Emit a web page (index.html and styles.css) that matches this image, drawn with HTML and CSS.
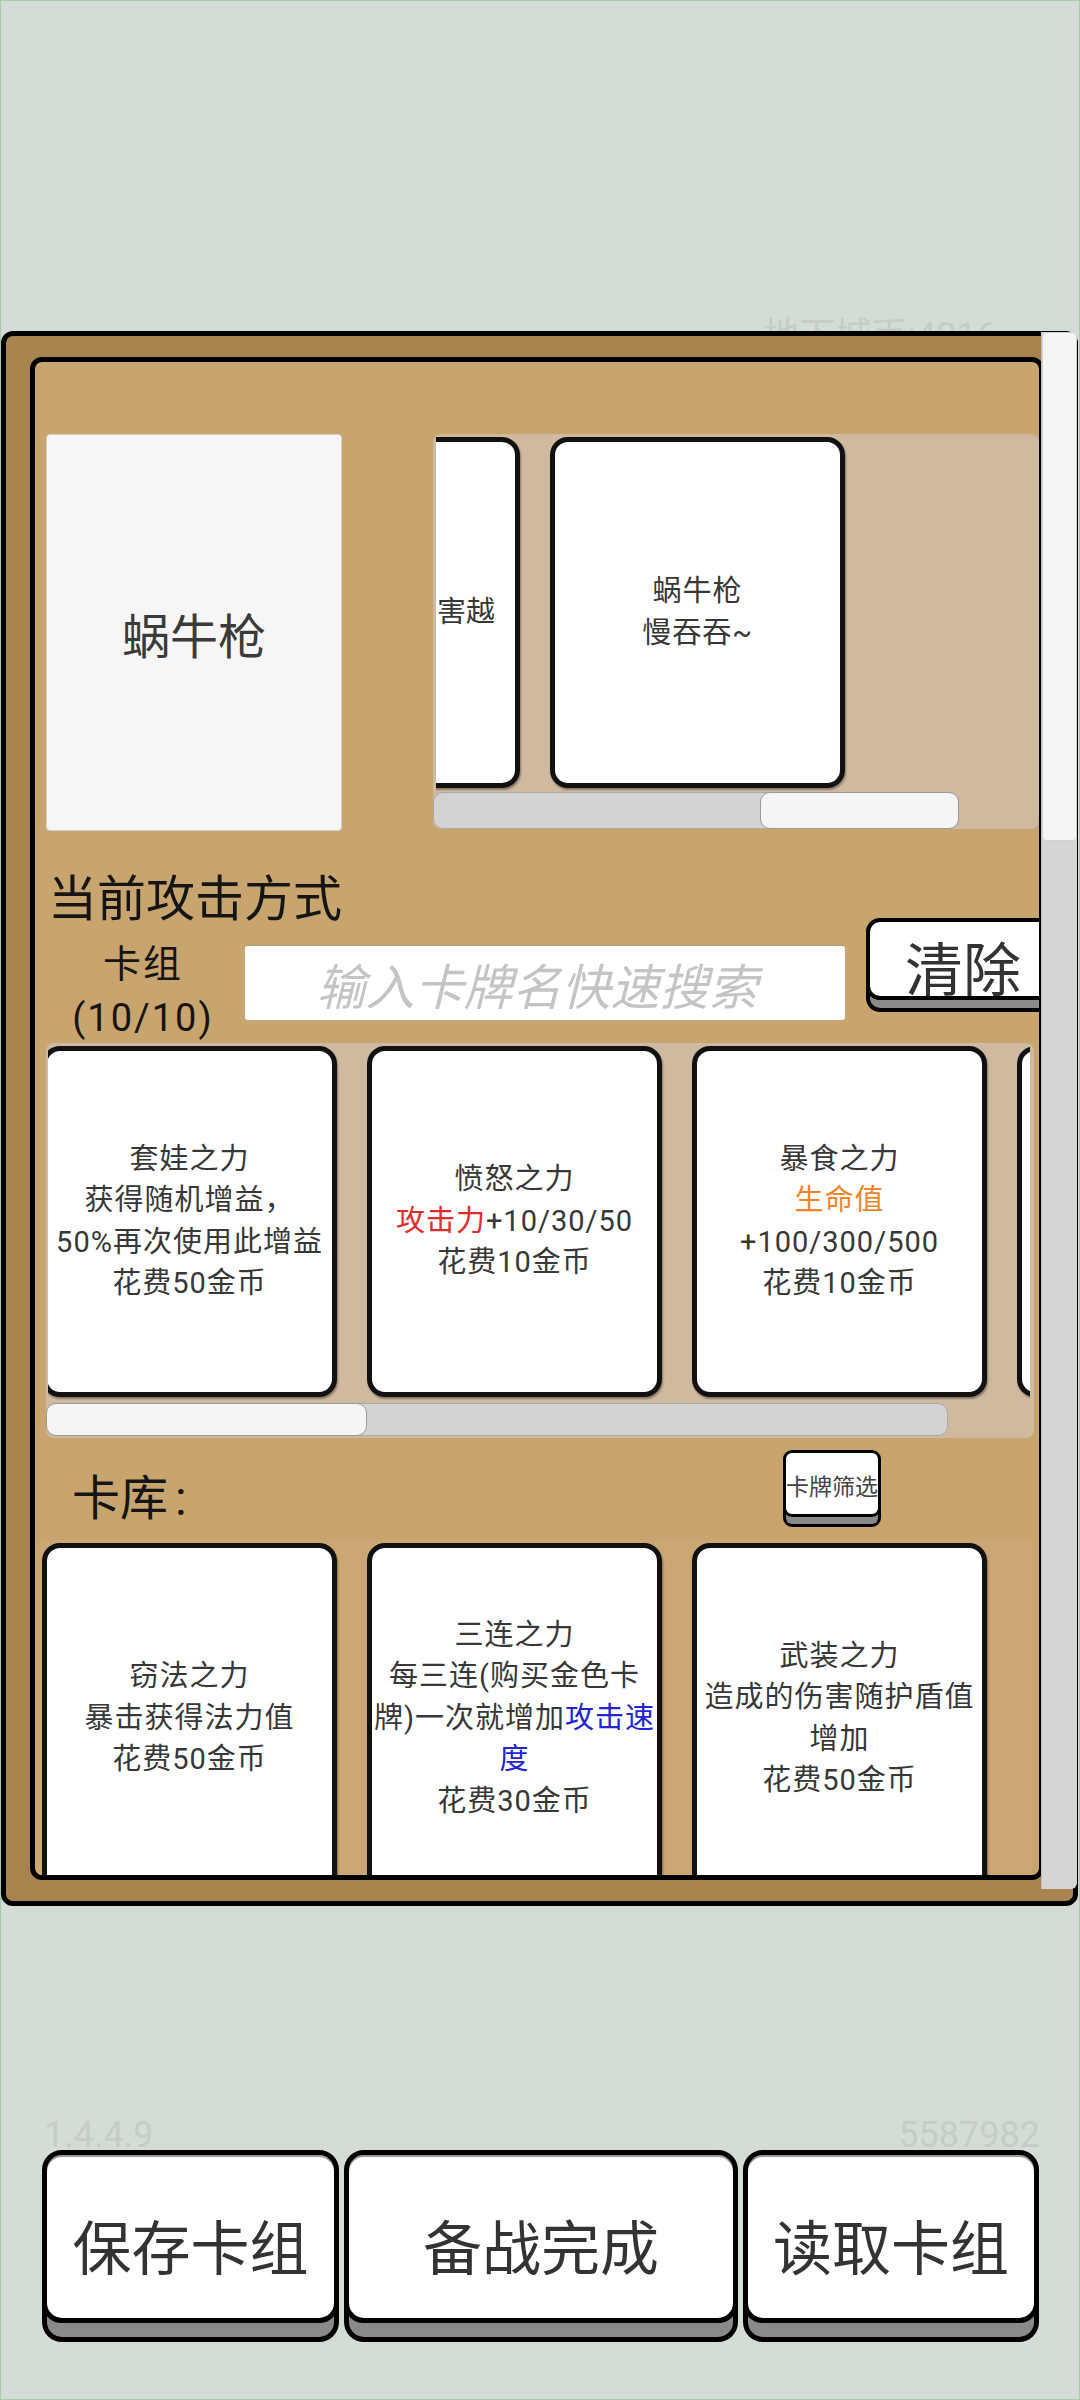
FILE: index.html
```html
<!DOCTYPE html>
<html lang="zh-CN">
<head>
<meta charset="utf-8">
<title>卡组</title>
<link rel="stylesheet" href="styles.css">
</head>
<body>
<div class="screen">
  <div class="topbar"><span class="coins">地下城币:4216</span></div>

  <div class="frame">
    <div class="board">
      <div class="top-row">
        <div class="weapon">蜗牛枪</div>
        <div class="rail rail-top">
          <div class="cards cards-top">
            <div class="card card-peek"><p class="peek-text">害越</p></div>
            <div class="card"><p>蜗牛枪<br>慢吞吞~</p></div>
          </div>
          <div class="hbar hbar-top"><div class="hthumb thumb-top"></div></div>
        </div>
      </div>

      <h2 class="section-title">当前攻击方式</h2>

      <div class="deck-row">
        <div class="deck-label">卡组<br>(10/10)</div>
        <div class="search">输入卡牌名快速搜索</div>
        <button class="btn btn-clear">清除</button>
      </div>

      <div class="rail rail-deck">
        <div class="cards cards-deck">
          <div class="card card-first"><p>套娃之力<br>获得随机增益，<br>50%再次使用此增益<br>花费50金币</p></div>
          <div class="card"><p>愤怒之力<br><span class="red">攻击力</span>+10/30/50<br>花费10金币</p></div>
          <div class="card"><p>暴食之力<br><span class="orange">生命值</span><br>+100/300/500<br>花费10金币</p></div>
          <div class="card"></div>
        </div>
        <div class="hbar hbar-deck"><div class="hthumb thumb-deck"></div></div>
      </div>

      <div class="lib-head">
        <div class="lib-title">卡库<span class="colon">:</span></div>
        <button class="btn btn-filter">卡牌筛选</button>
      </div>

      <div class="rail-lib">
        <div class="cards cards-lib">
          <div class="card"><p>窃法之力<br>暴击获得法力值<br>花费50金币</p></div>
          <div class="card"><p>三连之力<br>每三连(购买金色卡<br>牌)一次就增加<span class="blue">攻击速<br>度</span><br>花费30金币</p></div>
          <div class="card"><p>武装之力<br>造成的伤害随护盾值<br>增加<br>花费50金币</p></div>
        </div>
      </div>
    </div>
    <div class="vscroll"><div class="vthumb"></div></div>
  </div>

  <div class="info"><span>1.4.4.9</span><span>5587982</span></div>

  <div class="actions">
    <button class="btn btn-big btn-save">保存卡组</button>
    <button class="btn btn-big btn-ready">备战完成</button>
    <button class="btn btn-big btn-load">读取卡组</button>
  </div>
</div>
</body>
</html>
```
FILE: styles.css
```css
* { box-sizing: border-box; margin: 0; padding: 0; }

html, body { width: 1080px; height: 2400px; }

body {
  background: #d4ddd5;
  font-family: Roboto, "Noto Sans CJK SC", sans-serif;
  color: #333;
  overflow: hidden;
}

.screen {
  width: 1080px;
  height: 2400px;
  border: 1px solid #a9c8a9;
  display: flex;
  flex-direction: column;
}

/* top coin counter, partly hidden behind the frame */
.topbar {
  height: 330px;
  flex-shrink: 0;
  display: flex;
  justify-content: flex-end;
  align-items: flex-end;
  padding-right: 82px;
}
.coins {
  font-size: 36px;
  line-height: 36px;
  color: #c5ccc7;
  margin-bottom: -23px;
}

/* outer brown frame */
.frame {
  position: relative;
  z-index: 1;
  flex-shrink: 0;
  height: 1575px;
  margin-right: 1px;
  border: 5px solid #000;
  border-radius: 12px;
  background: #a8844f;
  padding: 21px 29px 21px 24px;
  display: flex;
}

.board {
  flex: 1;
  border: 5px solid #000;
  border-radius: 12px;
  background: #c8a46e;
  overflow: hidden;
  display: flex;
  flex-direction: column;
  padding: 72px 0 0 11px;
}

.top-row {
  display: flex;
  height: 397px;
  gap: 91px;
  flex-shrink: 0;
}

.weapon {
  flex: 0 0 296px;
  background: #f6f6f6;
  border: 1px solid #d2cfc8;
  border-radius: 4px;
  display: flex;
  align-items: center;
  justify-content: center;
  font-size: 48px;
  color: #3a3a3a;
}

.rail {
  background: #cfb99f;
  border-radius: 8px;
}

.rail-top {
  flex: 1;
  height: 395px;
  display: flex;
  flex-direction: column;
}

.cards {
  display: flex;
  gap: 30px;
  overflow: hidden;
  flex-shrink: 0;
  padding-bottom: 3px;
}

.cards-top {
  margin: 3px 0 0 3px;
}

.card {
  flex: 0 0 295px;
  height: 351px;
  background: #fff;
  border: 5px solid #111;
  border-radius: 18px;
  box-shadow: 1px 2px 2px rgba(0, 0, 0, 0.35);
  display: flex;
  align-items: center;
  justify-content: center;
  text-align: center;
  font-size: 29px;
  line-height: 41.5px;
  letter-spacing: 1px;
  color: #383838;
}

.card-peek {
  margin-left: -211px;
  justify-content: flex-end;
  padding-right: 20px;
}
.peek-text {
  letter-spacing: 0;
}

.red { color: #e02b2b; }
.orange { color: #f0852d; }
.blue { color: #2424d2; }

/* horizontal scrollbars */
.hbar {
  flex-shrink: 0;
  display: flex;
  background: #d3d3d3;
  border: 1px solid #a9a9a9;
  border-radius: 10px;
}
.hthumb {
  background: #f5f5f5;
  border: 1px solid #9a9a9a;
  border-radius: 10px;
  margin: -1px;
}
.hbar-top {
  height: 37px;
  margin-top: 1px;
  margin-right: 80px;
  justify-content: flex-end;
}
.thumb-top { width: 199px; }

.hbar-deck {
  height: 33px;
  margin-top: 3px;
  margin-right: 86px;
}
.thumb-deck { width: 321px; }

.section-title {
  font-size: 49px;
  line-height: 42px;
  font-weight: 400;
  color: #151515;
  margin: 48px 0 0 2px;
  flex-shrink: 0;
}

.deck-row {
  display: flex;
  height: 124px;
  margin-top: -2px;
  flex-shrink: 0;
}

.deck-label {
  flex: 0 0 194px;
  padding-top: 18px;
  text-align: center;
  font-size: 38px;
  line-height: 54px;
  letter-spacing: 2px;
  color: #151515;
}

.search {
  flex: 0 0 600px;
  height: 75px;
  margin: 26px 0 0 5px;
  padding-right: 16px;
  background: #fff;
  border-radius: 3px;
  border-top: 1px solid #b49e7c;
  font-size: 49px;
  font-style: italic;
  color: #c4c4c4;
  display: flex;
  align-items: center;
  justify-content: center;
}

.btn {
  background: #fff;
  border: 4px solid #000;
  color: #333;
  font-family: inherit;
  white-space: nowrap;
}

.btn-clear {
  flex: 0 0 194px;
  height: 82px;
  margin-left: 21px;
  margin-top: -1px;
  border-radius: 14px;
  font-size: 58px;
  line-height: 58px;
  padding-top: 20px;
  box-shadow: 0 12px 0 -4px #8a8a8a, 0 12px 0 0 #000;
}

.rail-deck {
  flex-shrink: 0;
  width: 988px;
  height: 395px;
  padding-top: 3px;
  display: flex;
  flex-direction: column;
}

.cards-deck {
  margin: 0 4px 0 2px;
}
.card-first {
  margin-left: -6px;
}

.lib-head {
  display: flex;
  align-items: flex-start;
  height: 102px;
  flex-shrink: 0;
}

.lib-title {
  font-size: 48px;
  line-height: 48px;
  color: #151515;
  margin: 37px 0 0 26px;
}
.colon {
  margin-left: 7px;
}

.btn-filter {
  flex: 0 0 98px;
  height: 67px;
  margin: 12px 158px 0 auto;
  border: 3px solid #000;
  border-radius: 9px;
  font-size: 23px;
  line-height: 23px;
  color: #444;
  padding: 8px 0 0;
  box-shadow: 0 10px 0 -3px #8a8a8a, 0 10px 0 0 #000;
}

.rail-lib {
  flex: 1;
  min-height: 0;
  background: #caa773;
  border-radius: 8px 8px 0 0;
  margin: 0 7px 0 -8px;
  padding: 3px 0 0 4px;
}

/* vertical scrollbar of the frame */
.vscroll {
  position: absolute;
  top: -4px;
  right: -4px;
  bottom: 12px;
  width: 36px;
  background: #d5d5d5;
  border-left: 1px solid #bdbdbd;
  border-radius: 0 6px 6px 0;
}
.vthumb {
  height: 509px;
  background: #f5f5f5;
  border: 1px solid #d0d0d0;
  border-radius: 4px;
}

.info {
  flex-shrink: 0;
  display: flex;
  justify-content: space-between;
  margin-top: 211px;
  height: 33px;
  padding: 0 39px 0 43px;
  font-size: 36px;
  line-height: 36px;
  color: #c5ccc7;
}

.actions {
  flex-shrink: 0;
  display: flex;
  gap: 5px;
  padding-left: 41px;
}

.btn-big {
  height: 173px;
  border: 5px solid #000;
  border-radius: 20px;
  font-size: 59px;
  line-height: 59px;
  padding-top: 26px;
  box-shadow: inset 0 2px 0 #999, 0 19px 0 -5px #8a8a8a, 0 19px 0 0 #000;
}
.btn-save { flex: 0 0 297px; }
.btn-ready { flex: 0 0 394px; }
.btn-load { flex: 0 0 296px; }
```
